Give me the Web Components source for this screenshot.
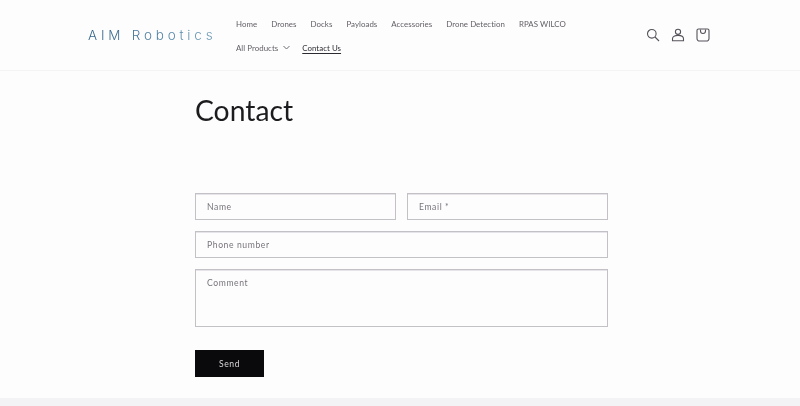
<!DOCTYPE html>
<html>
<head>
<meta charset="utf-8">
<title>Contact</title>
<style>
  html, body { margin: 0; height: 406px; overflow: hidden; }
  body { background: #fefdfe; color: #222; font-family: Lato, "Liberation Sans", sans-serif; display: flex; flex-direction: column; }
  site-main { flex: 1; }
  site-header, contact-form { filter: blur(0.3px); }
</style>
</head>
<body>
<site-header>
  <nav-link slot="nav">Home</nav-link>
  <nav-link slot="nav">Drones</nav-link>
  <nav-link slot="nav">Docks</nav-link>
  <nav-link slot="nav">Payloads</nav-link>
  <nav-link slot="nav">Accessories</nav-link>
  <nav-link slot="nav">Drone Detection</nav-link>
  <nav-link slot="nav">RPAS WILCO</nav-link>
  <nav-link slot="nav" menu>All Products</nav-link>
  <nav-link slot="nav" active>Contact Us</nav-link>
</site-header>
<site-main>
  <contact-form></contact-form>
</site-main>
<site-footer></site-footer>

<script>
class NavLink extends HTMLElement {
    constructor() {
        super();
        this.attachShadow({ mode: 'open' });
    }

    connectedCallback() {
        const chevron = this.hasAttribute('menu') ? `
            <svg width="7" height="5" viewBox="0 0 7 5" fill="none" stroke="#6f6c72" stroke-width="1">
                <path d="M0.5 1l3 3 3-3"/>
            </svg>` : '';
        this.shadowRoot.innerHTML = `
            <style>
                :host {
                    display: block;
                    padding: 0 7px;
                    height: 24px;
                    line-height: 24px;
                    font-size: 7.9px;
                    letter-spacing: 0.04px;
                    color: #615e64;
                    white-space: nowrap;
                }
                :host([menu]) { padding-right: 5px; }
                :host([active]) { color: #2d2b30; }
                .label { display: inline-flex; align-items: center; gap: 5px; height: 24px; }
                :host([active]) .text {
                    text-decoration: underline;
                    text-decoration-thickness: 1px;
                    text-underline-offset: 2px;
                }
            </style>
            <span class="label"><span class="text"><slot></slot></span>${chevron}</span>
        `;
    }
}

class SiteHeader extends HTMLElement {
    constructor() {
        super();
        this.attachShadow({ mode: 'open' });
        this.shadowRoot.innerHTML = `
            <style>
                :host {
                    display: flex;
                    align-items: center;
                    box-sizing: border-box;
                    height: 71px;
                    padding: 0 90px 0 88px;
                    border-bottom: 1px solid #f4f3f5;
                }
                .logo {
                    width: 141px;
                    font-family: Inter, "Liberation Sans", sans-serif;
                    font-size: 13.5px;
                    font-weight: 300;
                    letter-spacing: 3.8px;
                    white-space: nowrap;
                    background: linear-gradient(90deg, #2f5f84, #4f84a6 60%, #78a6be);
                    -webkit-background-clip: text;
                    background-clip: text;
                    color: transparent;
                }
                nav {
                    display: flex;
                    flex-wrap: wrap;
                    width: 345px;
                    padding-top: 1px;
                }
                .icons {
                    display: flex;
                    gap: 11px;
                    margin-left: auto;
                }
                svg { display: block; width: 14px; height: 14px; fill: none; stroke: #55525a; stroke-width: 1.1; }
            </style>
            <div class="logo">AIM Robotics</div>
            <nav><slot name="nav"></slot></nav>
            <div class="icons">
                <svg viewBox="0 0 14 14"><circle cx="5.8" cy="5.800" r="4.3"/><path d="M9 9l4 4"/></svg>
                <svg viewBox="0 0 14 14"><circle cx="7" cy="3.800" r="2.600"/><path d="M7 7.400c-3 0-5.500 1.300-5.500 3.400v2h11v-2c0-2.100-2.500-3.400-5.500-3.400z"/></svg>
                <svg viewBox="0 0 14 14"><path d="M2.500 1h9a1.500 1.500 0 0 1 1.500 1.500v8a2.500 2.500 0 0 1-2.500 2.500h-7A2.500 2.500 0 0 1 1 10.500v-8A1.500 1.500 0 0 1 2.500 1z"/><path d="M4.500 1.500v1.500a2.500 2.500 0 0 0 5 0v-1.500"/></svg>
            </div>
        `;
    }
}

class FormField extends HTMLElement {
    constructor() {
        super();
        this.attachShadow({ mode: 'open' });
        this.shadowRoot.innerHTML = `
            <style>
                :host {
                    display: block;
                    box-sizing: border-box;
                    height: 27px;
                    padding: 0 11px;
                    border: 1px solid #c4c1c6;
                    box-shadow: inset 0 1px 0 #e6e4e8;
                    font-size: 8.6px;
                    line-height: 26px;
                    letter-spacing: 0.6px;
                    color: #77747a;
                }
                :host([tall]) { height: 58px; }
            </style>
            <slot></slot>
        `;
    }
}

class ContactForm extends HTMLElement {
    constructor() {
        super();
        this.attachShadow({ mode: 'open' });
        this.shadowRoot.innerHTML = `
            <style>
                :host {
                    display: block;
                    width: 413px;
                    margin-left: 195px;
                }
                h1 {
                    margin: 0;
                    padding-top: 17px;
                    height: 105px;
                    font-size: 28.3px;
                    line-height: 44px;
                    font-weight: 400;
                    color: #1c1b1e;
                    box-sizing: border-box;
                }
                .form { margin-top: 17px; display: grid; grid-template-columns: 1fr 1fr; gap: 11px; }
                .wide { grid-column: 1 / -1; }
                .send {
                    display: flex;
                    align-items: center;
                    justify-content: center;
                    width: 69px;
                    height: 27px;
                    margin-top: 12px;
                    background: #0a090c;
                    color: #d8d6da;
                    font-size: 8.6px;
                    letter-spacing: 0.6px;
                }
            </style>
            <h1>Contact</h1>
            <div class="form">
                <form-field>Name</form-field>
                <form-field>Email *</form-field>
                <form-field class="wide">Phone number</form-field>
                <form-field class="wide" tall>Comment</form-field>
                <div class="send">Send</div>
            </div>
        `;
    }
}

class SiteFooter extends HTMLElement {
    constructor() {
        super();
        this.attachShadow({ mode: 'open' });
        this.shadowRoot.innerHTML = `
            <style>
                :host { display: block; height: 8px; background: #f3f2f4; }
            </style>
        `;
    }
}

customElements.define('nav-link', NavLink);
customElements.define('site-header', SiteHeader);
customElements.define('form-field', FormField);
customElements.define('contact-form', ContactForm);
customElements.define('site-footer', SiteFooter);
</script>
</body>
</html>
